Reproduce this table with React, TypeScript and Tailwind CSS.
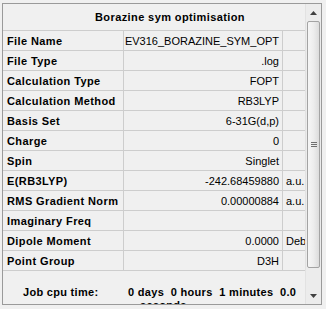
import React from 'react';

const rows: { label: string; value: string; unit?: string }[] = [
  { label: 'File Name', value: 'EV316_BORAZINE_SYM_OPT' },
  { label: 'File Type', value: '.log' },
  { label: 'Calculation Type', value: 'FOPT' },
  { label: 'Calculation Method', value: 'RB3LYP' },
  { label: 'Basis Set', value: '6-31G(d,p)' },
  { label: 'Charge', value: '0' },
  { label: 'Spin', value: 'Singlet' },
  { label: 'E(RB3LYP)', value: '-242.68459880', unit: 'a.u.' },
  { label: 'RMS Gradient Norm', value: '0.00000884', unit: 'a.u.' },
  { label: 'Imaginary Freq', value: '' },
  { label: 'Dipole Moment', value: '0.0000', unit: 'Debye' },
  { label: 'Point Group', value: 'D3H' },
];

function ScrollBar() {
  return (
    <div className="w-[16px] shrink-0 flex flex-col bg-[#ececec] border-l border-[#e2e2e2]">
      {/* up arrow */}
      <div className="h-[17px] flex items-center justify-center">
        <svg width="7" height="4" viewBox="0 0 7 4">
          <path d="M0 4 L3.5 0 L7 4 Z" fill="#404040" />
        </svg>
      </div>
      {/* thumb */}
      <div className="mx-[1px] h-[247px] rounded-[2px] border border-[#a3a3a3] bg-gradient-to-r from-[#f6f6f6] via-[#ededed] to-[#dcdcdc] flex items-center justify-center">
        <div className="flex flex-col gap-[1px]">
          <div className="w-[6px] h-[1px] bg-[#707070]" />
          <div className="w-[6px] h-[1px] bg-[#707070]" />
          <div className="w-[6px] h-[1px] bg-[#707070]" />
        </div>
      </div>
      <div className="flex-1" />
      {/* down arrow */}
      <div className="h-[17px] flex items-center justify-center">
        <svg width="7" height="4" viewBox="0 0 7 4">
          <path d="M0 0 L7 0 L3.5 4 Z" fill="#404040" />
        </svg>
      </div>
    </div>
  );
}

export default function App() {
  return (
    <div className="w-[326px] h-[309px] bg-[#f0f0f0] pl-[2px] pt-[3px]" style={{ fontFamily: '"Liberation Sans", Arial, sans-serif' }}>
      <div className="w-[320px] h-[302px] border border-[#9a9a9a] flex overflow-hidden text-[11px] text-black">
        <div className="w-[302px] shrink-0 flex flex-col overflow-hidden">
          {/* title */}
          <div className="h-[27px] shrink-0 border-b border-[#cdcdcd] flex items-center pl-[92px] font-bold tracking-[0.4px]">
            Borazine sym optimisation
          </div>
          {rows.map((r) => (
            <div key={r.label} className="h-[20px] shrink-0 border-b border-[#cdcdcd] flex leading-[19px]">
              <div className="w-[121px] shrink-0 border-r border-[#cdcdcd] pl-[4px] pt-[1px] font-bold tracking-[0.4px] whitespace-nowrap">
                {r.label}
              </div>
              <div className="w-[159px] shrink-0 border-r border-[#cdcdcd] pr-[3px] pt-[1px] text-right whitespace-nowrap">
                {r.value}
              </div>
              <div className="flex-1 overflow-hidden pl-[3px] pt-[1px] whitespace-nowrap">{r.unit}</div>
            </div>
          ))}
          {/* footer */}
          <div className="flex-1 overflow-hidden pt-[15px] font-bold tracking-[0.3px]">
            <div className="flex whitespace-pre leading-[13px]">
              <span className="pl-[20px] w-[125px] shrink-0">Job cpu time:</span>
              <span className="shrink-0">0 days  0 hours  1 minutes  0.0</span>
            </div>
            <div className="pl-[137px] leading-[13px]">seconds</div>
          </div>
        </div>
        <ScrollBar />
      </div>
    </div>
  );
}
